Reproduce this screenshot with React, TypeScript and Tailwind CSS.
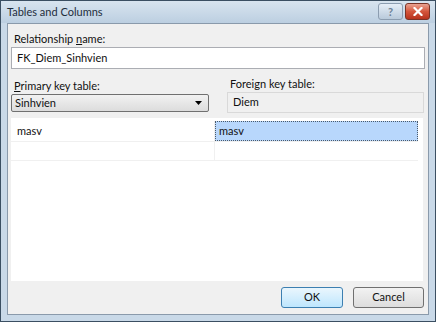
import React from 'react';

const font = { fontFamily: 'Lato, "Noto Sans", sans-serif' };

const HelpButton: React.FC = () => (
  <div className="w-[25px] h-[17px] rounded-[3px] border border-[#8c9db0] bg-gradient-to-b from-[#e6eef7] to-[#b9cadb] flex items-center justify-center text-[11px] font-bold text-[#6a7f96] leading-none">
    ?
  </div>
);

const CloseButton: React.FC = () => (
  <div className="w-[25px] h-[17px] rounded-[3px] border border-[#7a3326] bg-gradient-to-b from-[#e9a291] via-[#d4553b] to-[#b8321c] flex items-center justify-center">
    <svg width="10" height="9" viewBox="0 0 10 9">
      <path d="M1.5 1 L8.5 8 M8.5 1 L1.5 8" stroke="#fff" strokeWidth="2.2" strokeLinecap="square" />
    </svg>
  </div>
);

export default function App() {
  return (
    <div className="w-[436px] h-[322px] bg-[#c9d9e8] border border-[#3b4f62] flex flex-col text-[11px] text-[#111]" style={font}>
      {/* title bar */}
      <div className="h-[22px] flex items-center justify-between pl-[6px] pr-[5px] bg-gradient-to-b from-[#d8e4ef] to-[#bccfe1]">
        <span className="text-[11px] text-[#1e2d3c]">Tables and Columns</span>
        <div className="flex gap-[2px] mt-[-2px]">
          <HelpButton />
          <CloseButton />
        </div>
      </div>

      <div className="flex-1 flex px-[6px] pb-[6px]">
        <div className="flex-1 bg-[#f0f0f0] border border-[#8a9aab] flex flex-col px-[3px] pt-[8px] pb-[6px]">
          <label className="pl-[3px] leading-[14px]">
            Relationship <span className="underline">n</span>ame:
          </label>
          <div className="mt-[1px] h-[22px] bg-white border border-[#abadb3] flex items-center px-[5px]">
            FK_Diem_Sinhvien
          </div>

          <div className="mt-[8px] flex gap-[18px]">
            <div className="w-[198px] flex flex-col">
              <label className="pl-[3px] leading-[14px] mt-[2px]">
                <span className="underline">P</span>rimary key table:
              </label>
              <div className="mt-[1px] h-[18px] rounded-[2px] border border-[#707070] bg-gradient-to-b from-[#f2f2f2] to-[#dcdcdc] flex items-center justify-between px-[3px]">
                <span>Sinhvien</span>
                <svg width="7" height="4" viewBox="0 0 7 4" className="mr-[3px]">
                  <path d="M0 0 H7 L3.5 4 Z" fill="#000" />
                </svg>
              </div>
            </div>
            <div className="flex-1 flex flex-col">
              <label className="pl-[3px] leading-[14px]">Foreign key table:</label>
              <div className="mt-[1px] h-[21px] border border-[#d9d9d9] bg-[#f0f0f0] flex items-center px-[5px] mr-[1px]">
                Diem
              </div>
            </div>
          </div>

          <div className="mt-[5px] flex-1 bg-white mr-[2px] pt-[3px] pr-[5px]">
            <div className="flex border-b border-[#f0f0f0]">
              <div className="w-[204px] h-[20px] flex items-center px-[6px] border-r border-[#f0f0f0]">masv</div>
              <div className="flex-1 h-[20px] flex items-center px-[3px] bg-[#b8d7fc] border border-dotted border-[#4a5a6a]">masv</div>
            </div>
            <div className="flex border-b border-[#f0f0f0]">
              <div className="w-[204px] h-[18px] border-r border-[#f0f0f0]" />
              <div className="flex-1 h-[18px]" />
            </div>
          </div>

          <div className="mt-[6px] flex justify-end gap-[10px] pr-[1px]">
            <button className="w-[62px] h-[21px] rounded-[3px] border border-[#3c7fb1] bg-gradient-to-b from-[#eaf6fd] to-[#bee6fd] text-[11px]">
              OK
            </button>
            <button className="w-[71px] h-[21px] rounded-[3px] border border-[#707070] bg-gradient-to-b from-[#f2f2f2] to-[#dddddd] text-[11px]">
              Cancel
            </button>
          </div>
        </div>
      </div>
    </div>
  );
}
